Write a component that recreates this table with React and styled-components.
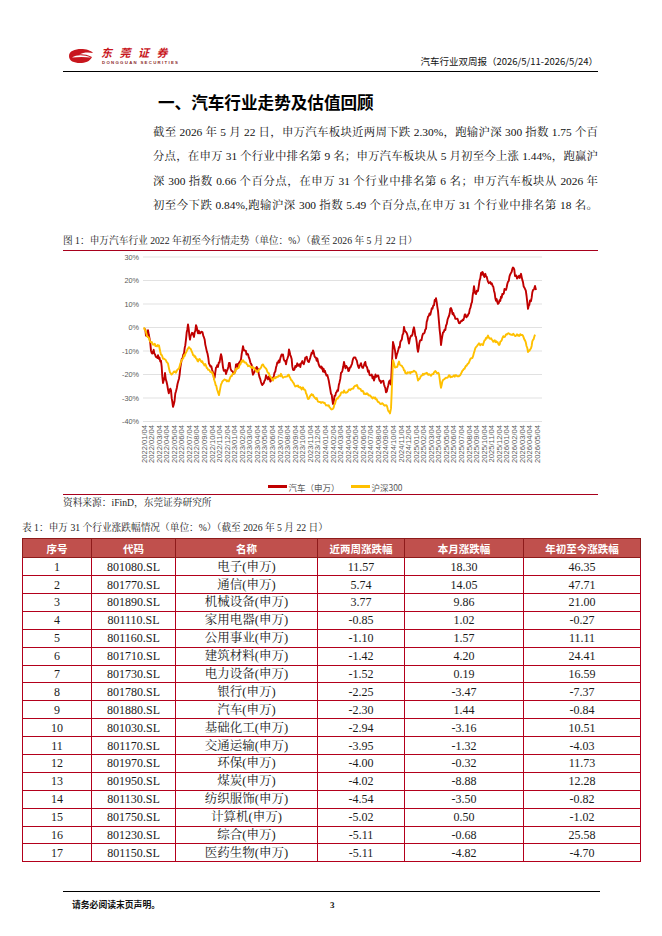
import React from "react";
import styled, { createGlobalStyle } from "styled-components";

const SERIF = `"Liberation Serif", "Noto Serif CJK SC", "Noto Sans CJK SC", serif`;
const SANS = `"Noto Sans CJK SC", "Liberation Sans", sans-serif`;
const RED = "#a8001c";

const GlobalStyle = createGlobalStyle`
  html, body { margin: 0; padding: 0; background: #fff; }
  body { font-family: ${SERIF}; color: #111; }
`;

// 图表关键点 [x 像素, 涨跌幅 %]
const AUTO = [
  [143,0],[145,-3],[147,-1],[150,-10],[154,-11],[157,-12],[160,-15],[162,-24],[164,-20],[167,-28],[170,-27],[172,-34],[175,-27],[178,-22],[180,-15],[183,-10],[185,-5],[187,1],[189,-4],[191,-1],[193,-3],[195,1],[197,-2],[200,-2],[203,-5],[205,-8],[208,-15],[211,-17],[213,-21],[215,-17],[217,-16],[220,-12],[222,-17],[225,-20],[228,-14],[231,-19],[233,-20],[235,-16],[237,-17],[240,-13],[242,-9],[244,-11],[247,-12],[250,-16],[252,-19],[255,-17],[257,-18],[260,-22],[262,-24],[265,-21],[267,-21],[270,-23],[272,-22],[275,-17],[277,-15],[280,-13],[282,-12],[285,-16],[288,-10],[290,-13],[292,-18],[295,-16],[297,-16],[300,-16],[302,-15],[305,-13],[307,-14],[310,-12],[312,-10],[315,-13],[317,-14],[320,-17],[324,-19],[327,-22],[330,-27],[332,-31],[335,-27],[337,-27],[340,-20],[343,-15],[346,-17],[348,-18],[351,-14],[355,-13],[358,-16],[362,-17],[365,-16],[367,-19],[370,-20],[373,-22],[376,-20],[380,-24],[383,-24],[385,-27],[388,-24],[390,-24],[392,-5],[394,-10],[395,-13],[398,-8],[400,-6],[403,0],[405,-3],[408,-6],[410,-3],[413,-1],[415,-4],[417,-10],[419,-5],[422,-3],[425,0],[427,5],[430,7],[433,10],[435,13],[437,8],[438,3],[440,-8],[442,-3],[445,0],[448,4],[450,8],[453,5],[455,3],[458,2],[461,4],[463,5],[466,5],[468,7],[471,12],[473,17],[475,15],[477,17],[480,24],[482,23],[485,22],[487,18],[490,19],[493,15],[495,12],[497,10],[500,13],[502,14],[505,17],[507,20],[510,23],[512,26],[514,22],[516,21],[518,23],[520,22],[522,18],[524,17],[527,9],[529,11],[530,10],[532,16],[534,17],[535,16],
];

const HS300 = [
  [143,0],[146,-3],[148,-5],[150,-6],[153,-7],[156,-8],[158,-8],[160,-11],[162,-13],[165,-14],[167,-15],[169,-19],[171,-20],[173,-18],[175,-19],[178,-17],[180,-15],[183,-12],[185,-11],[187,-9],[188,-8],[190,-10],[192,-12],[195,-13],[197,-14],[200,-14],[202,-15],[205,-16],[207,-18],[210,-19],[212,-20],[214,-23],[216,-26],[218,-28],[220,-24],[222,-22],[225,-23],[227,-23],[230,-21],[232,-20],[235,-18],[237,-17],[240,-15],[242,-14],[245,-15],[247,-16],[250,-17],[252,-17],[255,-18],[257,-19],[260,-17],[262,-16],[265,-18],[267,-19],[270,-21],[272,-22],[275,-21],[277,-21],[280,-20],[282,-21],[285,-21],[287,-20],[290,-22],[292,-24],[295,-25],[297,-25],[300,-26],[302,-26],[305,-28],[307,-30],[310,-29],[312,-29],[315,-30],[317,-31],[320,-32],[323,-32],[327,-33],[330,-34],[332,-35],[334,-32],[336,-30],[338,-29],[340,-28],[343,-27],[347,-27],[350,-26],[353,-25],[356,-25],[358,-26],[361,-27],[363,-28],[366,-28],[370,-29],[373,-30],[377,-31],[380,-32],[382,-32],[385,-33],[387,-35],[389,-36],[390,-34],[392,-14],[394,-17],[395,-17],[398,-15],[400,-16],[403,-18],[405,-20],[408,-19],[410,-19],[413,-18],[415,-19],[417,-23],[419,-21],[422,-20],[425,-19],[428,-20],[430,-20],[433,-19],[435,-19],[438,-20],[440,-25],[442,-22],[445,-22],[448,-21],[450,-21],[453,-21],[457,-21],[460,-19],[462,-18],[465,-17],[467,-16],[470,-13],[472,-12],[475,-8],[478,-7],[480,-7],[482,-7],[485,-5],[487,-4],[490,-5],[493,-6],[496,-6],[498,-7],[500,-6],[503,-4],[505,-3],[508,-2],[510,-3],[513,-3],[516,-3],[518,-4],[520,-3],[522,-4],[524,-5],[527,-10],[529,-9],[530,-9],[532,-5],[534,-3],
];

const yOf = (v) => 327.5 - v * 2.35;

// 插值 + 少量抖动，让折线看起来像日线
const toPoints = (pts, seed, amp) => {
  let s = seed;
  const rnd = () => {
    s = (s * 16807) % 2147483647;
    return s / 2147483647 - 0.5;
  };
  const out = [];
  let n = 0;
  for (let i = 0; i < pts.length - 1; i++) {
    const [x0, v0] = pts[i];
    const [x1, v1] = pts[i + 1];
    const steps = Math.max(1, Math.round((x1 - x0) / 0.7));
    for (let k = 0; k < steps; k++) {
      const t = k / steps;
      n = n * 0.45 + rnd() * amp;
      out.push([x0 + (x1 - x0) * t, v0 + (v1 - v0) * t + n]);
    }
  }
  const last = pts[pts.length - 1];
  out.push(last);
  return out.map(([x, v]) => `${x.toFixed(1)},${yOf(v).toFixed(1)}`).join(" ");
};

const MONTHS = [];
for (let y = 2022; y <= 2026; y++) {
  for (let m = 1; m <= 12; m++) {
    if (y === 2026 && m > 5) break;
    MONTHS.push(`${y}/${String(m).padStart(2, "0")}/04`);
  }
}

const ROWS = [
  [1, "801080.SL", "电子(申万)", "11.57", "18.30", "46.35"],
  [2, "801770.SL", "通信(申万)", "5.74", "14.05", "47.71"],
  [3, "801890.SL", "机械设备(申万)", "3.77", "9.86", "21.00"],
  [4, "801110.SL", "家用电器(申万)", "-0.85", "1.02", "-0.27"],
  [5, "801160.SL", "公用事业(申万)", "-1.10", "1.57", "11.11"],
  [6, "801710.SL", "建筑材料(申万)", "-1.42", "4.20", "24.41"],
  [7, "801730.SL", "电力设备(申万)", "-1.52", "0.19", "16.59"],
  [8, "801780.SL", "银行(申万)", "-2.25", "-3.47", "-7.37"],
  [9, "801880.SL", "汽车(申万)", "-2.30", "1.44", "-0.84"],
  [10, "801030.SL", "基础化工(申万)", "-2.94", "-3.16", "10.51"],
  [11, "801170.SL", "交通运输(申万)", "-3.95", "-1.32", "-4.03"],
  [12, "801970.SL", "环保(申万)", "-4.00", "-0.32", "11.73"],
  [13, "801950.SL", "煤炭(申万)", "-4.02", "-8.88", "12.28"],
  [14, "801130.SL", "纺织服饰(申万)", "-4.54", "-3.50", "-0.82"],
  [15, "801750.SL", "计算机(申万)", "-5.02", "0.50", "-1.02"],
  [16, "801230.SL", "综合(申万)", "-5.11", "-0.68", "25.58"],
  [17, "801150.SL", "医药生物(申万)", "-5.11", "-4.82", "-4.70"],
];

const COLS = [
  ["序号", 69],
  ["代码", 84],
  ["名称", 142],
  ["近两周涨跌幅", 87],
  ["本月涨跌幅", 119],
  ["年初至今涨跌幅", 117],
];

const LogoMark = () => (
  <svg width="26" height="16" viewBox="0 0 26 16">
    <path
      d="M1 8 C1 3 7 1 13 1 C18 1 23 2.5 25 5 C21 4 15 4.2 11 6.5 C14 6 19 6.5 24 9 C22 13.5 17 15 12 15 C6 15 1 13 1 8 Z"
      fill="#c8161d"
    />
    <path d="M4 9.5 C9 6.5 16 6.8 23 9.6 C17 8.6 10 8.7 4 9.5 Z" fill="#fff" />
  </svg>
);

const Chart = () => (
  <svg width="536" height="224" viewBox="62 251 536 224">
    {[30, 20, 10, 0, -10, -20, -30, -40].map((v) => (
      <g key={v}>
        <line x1="142" x2="541" y1={yOf(v)} y2={yOf(v)} stroke="#d9d9d9" strokeWidth="0.8" />
        <text x="138" y={yOf(v) + 2.6} textAnchor="end" fontSize="7.3" fill="#595959" fontFamily="Liberation Sans">
          {v}%
        </text>
      </g>
    ))}
    {MONTHS.map((m, i) => {
      const x = 145.5 + i * 7.56;
      return (
        <text
          key={m}
          x={x}
          y="425"
          transform={`rotate(-90 ${x} 425)`}
          textAnchor="end"
          fontSize="7.6"
          fill="#595959"
          fontFamily="Liberation Sans"
        >
          {m}
        </text>
      );
    })}
    <polyline points={toPoints(AUTO, 12345, 2.2)} fill="none" stroke="#c00000" strokeWidth="1.9" strokeLinejoin="round" />
    <polyline points={toPoints(HS300, 67891, 1.1)} fill="none" stroke="#ffc000" strokeWidth="1.9" strokeLinejoin="round" />
  </svg>
);

export default function App() {
  return (
    <>
      <GlobalStyle />
      <Page>
        <HeaderBar>
          <Logo>
            <LogoMark />
            <Brand>
              <BrandName>东莞证券</BrandName>
              <BrandSub>DONGGUAN SECURITIES</BrandSub>
            </Brand>
          </Logo>
          <HeaderTitle>汽车行业双周报（2026/5/11-2026/5/24）</HeaderTitle>
        </HeaderBar>

        <Column>
          <Heading>一、汽车行业走势及估值回顾</Heading>
          <Para>
            <Line>截至 2026 年 5 月 22 日，申万汽车板块近两周下跌 2.30%，跑输沪深 300 指数 1.75 个百</Line>
            <Line>分点，在申万 31 个行业中排名第 9 名；申万汽车板块从 5 月初至今上涨 1.44%，跑赢沪</Line>
            <Line>深 300 指数 0.66 个百分点，在申万 31 个行业中排名第 6 名；申万汽车板块从 2026 年</Line>
            <Line>初至今下跌 0.84%,跑输沪深 300 指数 5.49 个百分点,在申万 31 个行业中排名第 18 名。</Line>
          </Para>

          <Figure>
            <Caption>图 1：申万汽车行业 2022 年初至今行情走势（单位：%）（截至 2026 年 5 月 22 日）</Caption>
            <Chart />
            <Legend>
              <LegendItem>
                <Swatch $color="#c00000" />
                汽车（申万）
              </LegendItem>
              <LegendItem>
                <Swatch $color="#ffc000" />
                沪深300
              </LegendItem>
            </Legend>
          </Figure>
          <Source>资料来源：iFinD，东莞证券研究所</Source>
        </Column>

        <TableSection>
          <TableCaption>表 1：申万 31 个行业涨跌幅情况（单位：%）（截至 2026 年 5 月 22 日）</TableCaption>
          <Table>
            <colgroup>
              {COLS.map(([n, w]) => (
                <col key={n} style={{ width: w }} />
              ))}
            </colgroup>
            <thead>
              <tr>
                {COLS.map(([n]) => (
                  <Th key={n}>{n}</Th>
                ))}
              </tr>
            </thead>
            <tbody>
              {ROWS.map((r) => (
                <tr key={r[0]}>
                  {r.map((c, i) => (
                    <Td key={i} $name={i === 2}>
                      {c}
                    </Td>
                  ))}
                </tr>
              ))}
            </tbody>
          </Table>
        </TableSection>

        <Footer>
          <FooterNote>请务必阅读末页声明。</FooterNote>
          <PageNo>3</PageNo>
        </Footer>
      </Page>
    </>
  );
}

const Page = styled.div`
  width: 662px;
  height: 936px;
  overflow: hidden;
  position: relative;
`;

const HeaderBar = styled.header`
  display: flex;
  justify-content: space-between;
  align-items: flex-end;
  margin: 0 64px 0 63px;
  padding: 46px 0 4px;
  border-bottom: 1.5px solid #000;
`;

const Logo = styled.div`
  display: flex;
  align-items: center;
  gap: 7px;
  margin-left: 5px;
  margin-bottom: 2px;
`;

const Brand = styled.div`
  display: flex;
  flex-direction: column;
  align-items: flex-start;
  gap: 1px;
`;

const BrandName = styled.span`
  font-family: ${SANS};
  font-size: 11px;
  line-height: 13px;
  font-weight: 700;
  font-style: italic;
  letter-spacing: 7.5px;
  color: #c8161d;
`;

const BrandSub = styled.span`
  font-family: "Liberation Sans", sans-serif;
  font-size: 4.3px;
  line-height: 5px;
  font-weight: 700;
  letter-spacing: 1.3px;
  color: #8a2a2a;
  margin-left: 1px;
`;

const HeaderTitle = styled.div`
  font-family: ${SANS};
  font-size: 9.5px;
  line-height: 12px;
  color: #111;
`;

const Column = styled.section`
  margin: 0 64px 0 63px;
`;

const Heading = styled.h1`
  margin: 18px 0 0;
  padding-left: 95px;
  font-family: ${SANS};
  font-size: 16.6px;
  line-height: 24px;
  font-weight: 700;
  color: #000;
`;

const Para = styled.div`
  margin-top: 6px;
  padding-left: 90px;
  font-size: 11.4px;
  line-height: 24.3px;
  color: #111;
`;

const Line = styled.div`
  white-space: nowrap;
  text-align: justify;
  text-align-last: justify;
`;

const Figure = styled.figure`
  margin: 17px 0 0;
  border-bottom: 1.5px solid ${RED};
`;

const Caption = styled.div`
  font-size: 9.7px;
  line-height: 14px;
  padding-bottom: 2px;
  border-bottom: 1.5px solid ${RED};
  color: #222;
`;

const Legend = styled.div`
  display: flex;
  justify-content: center;
  gap: 12px;
  height: 15px;
  padding-left: 10px;
  align-items: center;
`;

const LegendItem = styled.span`
  display: flex;
  align-items: center;
  font-family: ${SANS};
  font-size: 8.5px;
  color: #595959;
`;

const Swatch = styled.i`
  display: inline-block;
  width: 19px;
  height: 2.5px;
  margin-right: 1px;
  background: ${(p) => p.$color};
`;

const Source = styled.div`
  font-size: 9.7px;
  line-height: 14px;
  margin-top: 1px;
  color: #222;
`;

const TableSection = styled.section`
  margin: 11px 0 0 22px;
  width: 618px;
`;

const TableCaption = styled.div`
  font-size: 9.7px;
  line-height: 14px;
  margin-bottom: 3px;
  color: #222;
`;

const Table = styled.table`
  width: 618px;
  table-layout: fixed;
  border-collapse: collapse;
  border: 1.5px solid ${RED};
`;

const Th = styled.th`
  height: 18px;
  padding: 0;
  background: #c0504d;
  color: #fff;
  font-family: ${SANS};
  font-size: 10.5px;
  font-weight: 700;
  border: 1px solid #8e1b1b;
`;

const Td = styled.td`
  height: 16.9px;
  padding: 0;
  text-align: center;
  font-size: ${(p) => (p.$name ? "12.5px" : "12px")};
  line-height: 16px;
  color: #1a1a1a;
  border: 1px solid #b3001b;
`;

const Footer = styled.footer`
  display: flex;
  margin: 29px 62px 0 63px;
  padding: 7px 0 0 9px;
  border-top: 1px solid #000;
`;

const FooterNote = styled.span`
  width: 258px;
  font-family: ${SANS};
  font-size: 8.8px;
  line-height: 12px;
  font-weight: 700;
`;

const PageNo = styled.span`
  font-size: 9px;
  line-height: 12px;
  font-weight: 700;
`;
